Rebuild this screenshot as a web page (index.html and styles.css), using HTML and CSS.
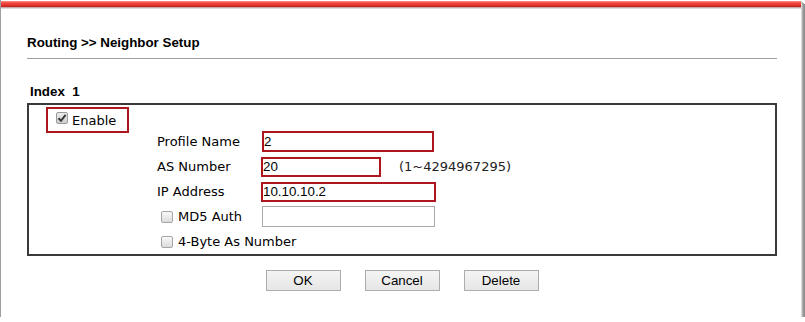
FILE: index.html
```html
<!DOCTYPE html>
<html>
<head>
<meta charset="utf-8">
<link rel="stylesheet" href="styles.css">
</head>
<body>
<div class="frame">
  <div class="topbar"></div>
  <div class="content">
    <h1 class="title">Routing &gt;&gt; Neighbor Setup</h1>
    <div class="rule"></div>
    <div class="index">Index&nbsp; 1</div>
    <div class="box">
      <div class="enable">
        <span class="cb cb-checked"><svg width="10" height="10" viewBox="0 0 10 10"><path d="M1.5 5.2 L4 7.8 L8.6 1.8" fill="none" stroke="#3a3a3a" stroke-width="2"/></svg></span>
        <span class="enable-text">Enable</span>
      </div>
      <div class="rows">
        <div class="row">
          <span class="label">Profile Name</span>
          <input class="inp inp-red inp-profile" type="text" value="2">
        </div>
        <div class="row">
          <span class="label">AS Number</span>
          <input class="inp inp-red inp-as" type="text" value="20">
          <span class="hint">(1~4294967295)</span>
        </div>
        <div class="row">
          <span class="label">IP Address</span>
          <input class="inp inp-red inp-ip" type="text" value="10.10.10.2">
        </div>
        <div class="row">
          <span class="label label-cb"><span class="cb"></span><span>MD5 Auth</span></span>
          <input class="inp inp-gray" type="text" value="">
        </div>
        <div class="row">
          <span class="label label-cb"><span class="cb"></span><span>4-Byte As Number</span></span>
        </div>
      </div>
    </div>
    <div class="buttons">
      <button class="btn">OK</button>
      <button class="btn">Cancel</button>
      <button class="btn">Delete</button>
    </div>
  </div>
</div>
</body>
</html>
```
FILE: styles.css
```css
html, body {
  margin: 0;
  padding: 0;
  background: #ffffff;
}

.frame {
  width: 800px;
  height: 317px;
  border-left: 1px solid #a0a0a0;
  box-shadow: 1px 1px 0 #d8d8d8, 2px 2px 0 #b0b0b0, 3px 3px 0 #999999, 4px 4px 0 #8c8c8c;
  box-sizing: content-box;
  overflow: hidden;
}

.topbar {
  margin-top: 1px;
  height: 6px;
  background: linear-gradient(#ff9a94 0%, #f24b43 30%, #e3342c 70%, #b5221d 100%);
  box-shadow: 0 1px 0 #c8a8a8, 0 2px 0 #dddddd;
}

.content {
  padding-left: 26px;
  width: 750px;
  font-family: "Liberation Sans", Arial, sans-serif;
  color: #000;
}

.title {
  margin: 28px 0 0 0;
  font-size: 13.33px;
  line-height: 16px;
  font-weight: bold;
}

.rule {
  margin-top: 7px;
  height: 1px;
  background: #a0a0a0;
}

.index {
  margin-top: 25px;
  padding-left: 3px;
  font-size: 13.33px;
  line-height: 16px;
  font-weight: bold;
}

.box {
  margin-top: 3px;
  border: 2px solid #3a3a3a;
  height: 149px;
  font-family: "DejaVu Sans", Verdana, sans-serif;
  font-size: 13px;
}

.enable {
  margin: 2px 0 0 17px;
  width: 83px;
  height: 26px;
  box-sizing: border-box;
  border: 2px solid #ad161c;
  display: flex;
  align-items: center;
  padding-left: 8px;
  gap: 4px;
}

.enable .cb {
  margin-bottom: 4px;
}

.enable-text {
  font-size: 13px;
}

.cb {
  display: inline-flex;
  align-items: center;
  justify-content: center;
  width: 12px;
  height: 12px;
  box-sizing: border-box;
  border: 1px solid #a6a6a6;
  border-radius: 2px;
  background: linear-gradient(#f8f8f8, #dcdcdc);
  flex: none;
}

.cb-checked {
  background: linear-gradient(#ececec, #cfcfcf);
  border-color: #9a9a9a;
}

.rows {
  margin: -4px 0 0 128px;
}

.row {
  height: 25px;
  display: flex;
  align-items: center;
}

.label {
  width: 104px;
  flex: none;
  white-space: nowrap;
}

.label-cb {
  display: flex;
  align-items: center;
  gap: 5px;
  padding-left: 4px;
  box-sizing: border-box;
  width: 105px;
}

.inp {
  box-sizing: border-box;
  font-family: "Liberation Sans", Arial, sans-serif;
  font-size: 13.33px;
  color: #000;
  padding: 0;
  margin: 0;
  outline: none;
  background: #fff;
}

.inp-red {
  border: 2px solid #ad161c;
}

.inp-profile {
  margin-left: 1px;
  width: 172px;
  height: 21px;
}

.inp-as {
  width: 120px;
  height: 20px;
}

.inp-ip {
  width: 175px;
  height: 20px;
}

.inp-gray {
  border: 1px solid #a9a9a9;
  width: 173px;
  height: 21px;
}

.hint {
  margin-left: 18px;
  color: #222;
}

.buttons {
  margin-top: 14px;
  display: flex;
  justify-content: center;
  gap: 24px;
}

.btn {
  width: 75px;
  height: 21px;
  box-sizing: border-box;
  border: 1px solid #acacac;
  border-radius: 0;
  background: linear-gradient(#f4f4f4, #e6e6e6);
  font-family: "Liberation Sans", Arial, sans-serif;
  font-size: 13.33px;
  color: #000;
  padding: 0;
}
```
